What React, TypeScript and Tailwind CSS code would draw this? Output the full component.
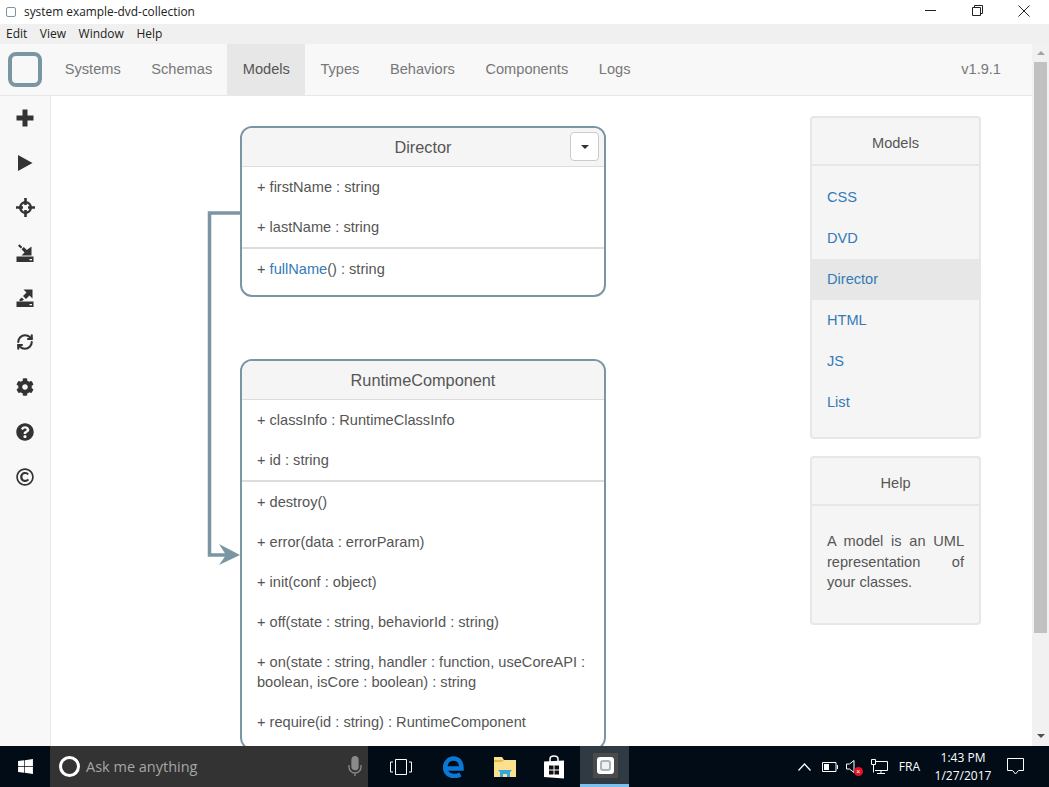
import React from 'react';
import { FaCog, FaQuestionCircle, FaRegCopyright, FaWindows } from 'react-icons/fa';
import { RefreshCw } from 'lucide-react';

const STEEL = '#7b96a3';

const tabs = ['Systems', 'Schemas', 'Models', 'Types', 'Behaviors', 'Components', 'Logs'];
const models = ['CSS', 'DVD', 'Director', 'HTML', 'JS', 'List'];

const ImportGlyph = ({ out }: { out?: boolean }) => (
  <svg width="18" height="18" viewBox="0 0 18 18" fill="#333">
    <path d="M0.500 12.500h17v5.500h-17z" />
    <rect x="13.500" y="15" width="2.500" height="1.300" fill="#f8f8f8" />
    {out ? (
      <>
        <path d="M16.500 0.500v9l-3-3-3.500 3.500-3-3 3.500-3.500-3-3z" />
        <path d="M5.800 8.500l2.200 2.200-2.400 1.300H3.500v-1.500z" />
      </>
    ) : (
      <>
        <path d="M15.500 2.500V11.500h-10l3-3-3-3.300 2.300-2.200 3 3z" />
        <path d="M3.500 0.200l2.800 2.800-1.500 1.500-2.800-2.800z" />
      </>
    )}
  </svg>
);

const sidebarIcons: React.ReactNode[] = [
  <svg key="plus" width="18" height="18" viewBox="0 0 18 18" fill="#333"><path d="M6.500 0.500h5v6H17.500v5h-6V17.500h-5v-6H0.500v-5h6z" /></svg>,
  <svg key="play" width="18" height="18" viewBox="0 0 18 18" fill="#333"><path d="M2 1l14.500 8-14.500 8z" /></svg>,
  <svg key="target" width="19" height="19" viewBox="0 0 19 19" fill="none" stroke="#333">
    <circle cx="9.500" cy="9.500" r="5.300" strokeWidth="2.400" />
    <path d="M9.500 0v7M9.500 12v7M0 9.500h7M12 9.500h7" strokeWidth="2.600" />
    <path d="M7.300 7.300l1 1M11.700 7.300l-1 1M7.300 11.700l1-1M11.700 11.700l-1-1" stroke="#f8f8f8" strokeWidth="1.200" />
  </svg>,
  <ImportGlyph key="import" />,
  <ImportGlyph key="export" out />,
  <RefreshCw key="refresh" size={18} strokeWidth={2.800} color="#333" />,
  <FaCog key="cog" size={18} color="#333" />,
  <FaQuestionCircle key="help" size={18} color="#333" />,
  <FaRegCopyright key="copy" size={18} color="#333" />,
];

const UmlCard = ({
  title,
  props,
  methods,
  menu,
}: {
  title: string;
  props: string[];
  methods: React.ReactNode[];
  menu?: boolean;
}) => (
  <div className="w-[366px] shrink-0 rounded-[12px] border-2 border-[#7b96a3] bg-white text-[14.600px] leading-5 text-[#555]">
    <div className="relative flex h-[39px] items-center justify-center rounded-t-[10px] border-b border-[#ddd] bg-[#f5f5f5] text-[16.300px] text-[#555]">
      {title}
      {menu && (
        <div className="absolute right-[5px] top-[4px] flex h-[29px] w-[29px] items-center justify-center rounded border border-[#ccc] bg-white">
          <div className="h-0 w-0 border-x-[4px] border-t-[4px] border-x-transparent border-t-[#333]" />
        </div>
      )}
    </div>
    <div className="flex flex-col gap-5 border-b-2 border-[#ddd] px-[15px] py-[10px]">
      {props.map((p) => (
        <div key={p}>{p}</div>
      ))}
    </div>
    <div className="flex flex-col gap-5 px-[15px] pb-[16px] pt-[10px]">
      {methods.map((m, i) => (
        <div key={i}>{m}</div>
      ))}
    </div>
  </div>
);

const App: React.FC = () => {
  return (
    <div className="flex h-[787px] w-[1049px] flex-col overflow-hidden bg-white font-['Liberation_Sans',sans-serif]">
      {/* Window title */}
      <div className="flex h-6 shrink-0 items-center bg-white pl-[6px] font-['Open_Sans',sans-serif] text-[11.900px] text-[#222]">
        <div className="h-[10px] w-[10px] rounded-[2px] border border-[#7b96a3]" />
        <span className="ml-2">system example-dvd-collection</span>
        <div className="mb-[3px] ml-auto flex items-center pr-[19px]">
          <div className="h-px w-[11px] bg-[#222]" />
          <svg className="ml-[36px]" width="11" height="11" viewBox="0 0 11 11" fill="none" stroke="#222">
            <path d="M0.500 2.500h8v8h-8zM2.500 2.500v-2h8v8h-2" />
          </svg>
          <svg className="ml-[35px]" width="12" height="12" viewBox="0 0 12 12" stroke="#222">
            <path d="M0.500 0.500l11 11M11.500 0.500l-11 11" />
          </svg>
        </div>
      </div>

      {/* Menu bar */}
      <div className="flex h-5 shrink-0 items-center gap-[12.500px] bg-[#f0f0f0] pl-[6px] font-['Open_Sans',sans-serif] text-[12px] text-[#222]">
        <span>Edit</span>
        <span>View</span>
        <span>Window</span>
        <span>Help</span>
      </div>

      <div className="flex min-h-0 flex-1">
        <div className="flex min-w-0 flex-1 flex-col">
          {/* Navbar */}
          <div className="flex h-[52px] shrink-0 items-stretch border-b border-[#e7e7e7] bg-[#f8f8f8] text-[14.600px] text-[#777]">
            <div className="ml-2 mr-[7.500px] flex items-center">
              <div className="h-[35px] w-[34px] rounded-[8px] border-[4px] border-[#7b96a3]" />
            </div>
            {tabs.map((t) => (
              <div
                key={t}
                className={`flex items-center px-[15.300px] ${t === 'Models' ? 'bg-[#e7e7e7] text-[#555]' : ''}`}
              >
                {t}
              </div>
            ))}
            <div className="ml-auto flex items-center pr-[31px]">v1.9.1</div>
          </div>

          <div className="flex min-h-0 flex-1">
            {/* Sidebar */}
            <div className="flex w-[51px] shrink-0 flex-col border-r border-[#e7e7e7] bg-[#f8f8f8]">
              {sidebarIcons.map((icon, i) => (
                <div key={i} className="flex h-[44.900px] shrink-0 items-center justify-center first:mt-[-0.500px]">
                  {icon}
                </div>
              ))}
            </div>

            {/* Canvas */}
            <div className="relative flex min-w-0 flex-1 flex-col gap-[62px] overflow-hidden pl-[189px] pt-[30px]">
              <svg className="absolute left-[150px] top-[100px]" width="50" height="370" viewBox="0 0 50 370" fill="none">
                <path d="M39 17H8.500v342h20" stroke={STEEL} strokeWidth="3.500" />
                <path d="M18 348l21 11-21 10 7-10z" fill={STEEL} />
              </svg>
              <UmlCard
                title="Director"
                menu
                props={['+ firstName : string', '+ lastName : string']}
                methods={[
                  <>
                    + <span className="text-[#337ab7]">fullName</span>() : string
                  </>,
                ]}
              />
              <UmlCard
                title="RuntimeComponent"
                props={['+ classInfo : RuntimeClassInfo', '+ id : string']}
                methods={[
                  '+ destroy()',
                  '+ error(data : errorParam)',
                  '+ init(conf : object)',
                  '+ off(state : string, behaviorId : string)',
                  '+ on(state : string, handler : function, useCoreAPI : boolean, isCore : boolean) : string',
                  '+ require(id : string) : RuntimeComponent',
                ]}
              />
            </div>

            {/* Right panels */}
            <div className="flex w-[222px] shrink-0 flex-col gap-[17px] pt-5 text-[14.600px] text-[#555]">
              <div className="w-[171px] rounded border-2 border-[#e7e7e7] bg-[#f5f5f5]">
                <div className="flex h-[48px] items-center justify-center border-b-2 border-[#e7e7e7] pt-[5px]">Models</div>
                <div className="flex flex-col pb-[14px] pt-[11px]">
                  {models.map((m) => (
                    <div
                      key={m}
                      className={`flex h-[41px] items-center px-[15px] text-[#337ab7] ${m === 'Director' ? 'bg-[#e7e7e7]' : ''}`}
                    >
                      {m}
                    </div>
                  ))}
                </div>
              </div>
              <div className="w-[171px] rounded border-2 border-[#e7e7e7] bg-[#f5f5f5]">
                <div className="flex h-[48px] items-center justify-center border-b-2 border-[#e7e7e7] pt-[5px]">Help</div>
                <p className="px-[15px] pb-[30.500px] pt-[25px] text-justify leading-[20.500px]">
                  A model is an UML representation of your classes.
                </p>
              </div>
            </div>
          </div>
        </div>

        {/* Scrollbar */}
        <div className="flex w-[17px] shrink-0 flex-col items-center bg-[#f1f1f1]">
          <div className="flex h-[18px] w-full shrink-0 items-center justify-center">
            <div className="h-0 w-0 border-x-[4px] border-b-[4px] border-x-transparent border-b-[#a3a3a3]" />
          </div>
          <div className="h-[571px] w-[13px] shrink-0 bg-[#c1c1c1]" />
          <div className="mt-auto flex h-[20px] w-full shrink-0 items-center justify-center">
            <div className="h-0 w-0 border-x-[4px] border-t-[4px] border-x-transparent border-t-[#505050]" />
          </div>
        </div>
      </div>

      {/* Taskbar */}
      <div className="relative flex h-[41px] shrink-0 items-stretch bg-[#010c17] text-white">
        <div className="flex w-[50px] items-center justify-center">
          <FaWindows size={17} color="#fff" />
        </div>
        <div className="flex w-[318px] items-center bg-[#333] pl-[9px] pr-[6px]">
          <div className="h-[21px] w-[21px] rounded-full border-[3px] border-white" />
          <span className="ml-[6px] font-['Open_Sans',sans-serif] text-[14.500px] text-[#a6a6a6]">Ask me anything</span>
          <svg className="ml-auto" width="14" height="21" viewBox="0 0 14 21" fill="none" stroke="#8a8a8a" strokeWidth="1.300">
            <rect x="4" y="0.700" width="6" height="13" rx="3" fill="#8a8a8a" />
            <path d="M1 9v2a6 6 0 0012 0V9M7 17v3" />
          </svg>
        </div>
        <div className="flex w-[212px] items-center">
          <svg className="ml-[22px] shrink-0" width="22" height="16" viewBox="0 0 22 16" fill="none" stroke="#fff">
            <path d="M5.500 0.500h11v15h-11zM3 3H0.500v10H3M19 3h2.500v10H19" />
          </svg>
          <svg className="ml-[31px] shrink-0" width="22" height="22" viewBox="0 0 22 22" fill="none" stroke="#0a78d7" strokeWidth="4.500">
            <path d="M3 12.500h15.500c0-6-3-10-8-10-4.500 0-8 3.500-8.500 9 .5 5.500 4 8.500 9 8.500 2.500 0 4.500-.5 6.500-1.500" />
          </svg>
          <svg className="ml-[29px] shrink-0" width="22" height="20" viewBox="0 0 22 20">
            <path d="M0 0h8l2 3h12v17H0z" fill="#fbe08d" />
            <path d="M0 3h10l-2 2H0z" fill="#e8b949" />
            <path d="M4 13h14l-2 2v5h-3v-3H9v3H6v-5z" fill="#33a6e0" />
          </svg>
          <svg className="ml-[27px] shrink-0" width="22" height="24" viewBox="0 0 22 24" fill="none">
            <path d="M7 7V4c0-4 8-4 8 0v3" stroke="#fff" strokeWidth="1.500" />
            <path d="M1 6.500l20-1V23.500l-20-1.500z" fill="#fff" />
            <path d="M6 10.500h4.500v4H6zM11.500 10.500H16v4h-4.500zM6 15.500h4.500v4H6zM11.500 15.500H16v4h-4.500z" fill="#111" />
          </svg>
        </div>
        <div className="flex w-[49px] items-center justify-center border-b-[3px] border-[#7cc0ee] bg-[#2f3a42] pl-[1px]">
          <div className="flex h-[25px] w-[25px] items-center justify-center bg-[#4a4a4a]">
            <div className="flex h-[17px] w-[17px] items-center justify-center rounded-[3px] bg-white">
              <div className="h-[11px] w-[11px] rounded-[3px] border-2 border-[#a5b6be] bg-[#eef2f4]" />
            </div>
          </div>
        </div>
        <div className="ml-auto flex items-center pr-[25px] text-[12px]">
          <svg width="13" height="8" viewBox="0 0 13 8" fill="none" stroke="#fff" strokeWidth="1.200">
            <path d="M0.500 7.500l6-6.500 6 6.500" />
          </svg>
          <svg className="ml-[11px]" width="16" height="10" viewBox="0 0 16 10" fill="none" stroke="#fff">
            <path d="M0.500 0.500h13.500v9H0.500z" />
            <path d="M2 2h5v6H2z" fill="#fff" stroke="none" />
            <path d="M15.500 3v4" />
          </svg>
          <span className="relative ml-[8px] block h-[14px] w-[17px]">
            <svg width="9" height="13" viewBox="0 0 9 13" fill="none" stroke="#fff">
              <path d="M0.500 4h3L8 0.500v12L3.500 9h-3z" />
            </svg>
            <span className="absolute bottom-[-2px] right-0 flex h-[9px] w-[9px] items-center justify-center rounded-full bg-[#e81123] text-[7px] leading-none">×</span>
          </span>
          <svg className="ml-[8px]" width="17" height="16" viewBox="0 0 17 16" fill="none" stroke="#fff">
            <path d="M4 2.500h12.500v9H4M10 11.500v3M6 14.500h8M0.500 0.500h4v5h-4zM2.500 5.500v8" />
          </svg>
          <span className="ml-[11px] font-['Open_Sans',sans-serif]">FRA</span>
          <div className="ml-[13px] flex w-[60px] flex-col items-center font-['Open_Sans',sans-serif] leading-[18px]">
            <span>1:43 PM</span>
            <span>1/27/2017</span>
          </div>
          <svg className="ml-[14px]" width="17" height="17" viewBox="0 0 17 17" fill="none" stroke="#fff">
            <path d="M0.500 0.500h16v12h-5l-3 3.500-3-3.500h-5z" />
          </svg>
        </div>
      </div>
    </div>
  );
};

export default App;
